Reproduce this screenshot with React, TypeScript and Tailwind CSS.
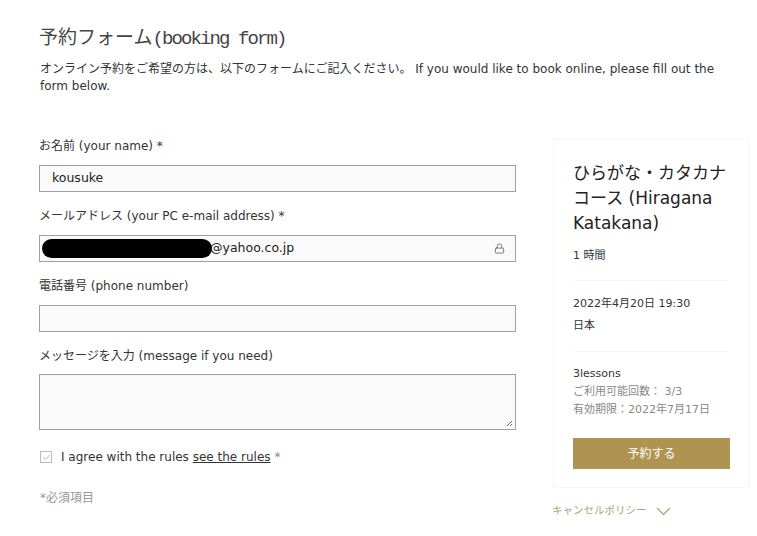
import { Lock, Check } from 'lucide-react';

const SANS = "font-['DejaVu_Sans','Noto_Sans_CJK_JP',sans-serif]";

function Field({ label, value, children, mt }: { label: string; value?: string; children?: React.ReactNode; mt?: string }) {
  return (
    <div className={mt}>
      <p className="h-[18px] leading-[18px] text-[12px] text-[#333]">{label}</p>
      <div className="mt-[10px] h-[27px] border border-[#a0a0a0] bg-[#fafafa] flex items-center px-[12px] text-[12.5px] text-[#222]">
        {children ?? value}
      </div>
    </div>
  );
}

export default function App() {
  return (
    <div className={`w-[757px] h-[536px] bg-white px-[39px] pt-[27px] ${SANS}`}>
      {/* Heading */}
      <h1 className="h-[24px] leading-[24px] text-[19px] text-[#444] font-['Liberation_Mono','Noto_Sans_CJK_JP',monospace]">
        予約フォーム<span className="tracking-[-1.9px]">(booking form)</span>
      </h1>
      <p className="mt-[10px] pl-px w-[690px] text-[12px] leading-[17px] text-[#333]">
        オンライン予約をご希望の方は、以下のフォームにご記入ください。 If you would like to book online, please fill out the form below.
      </p>

      <div className="mt-[42px] flex gap-[37px]">
        {/* Form column */}
        <div className="w-[477px] shrink-0">
          <Field label="お名前 (your name) *" value="kousuke" />
          <Field label="メールアドレス (your PC e-mail address) *" mt="mt-[15px]">
            <span className="flex-1 flex items-center">
              <span className="h-[19px] w-[170px] -ml-[10px] rounded-full bg-black" />
              <span className="-ml-[2px]">@yahoo.co.jp</span>
            </span>
            <Lock size={11} strokeWidth={1.6} className="text-[#555] -mr-[2px]" />
          </Field>
          <Field label="電話番号 (phone number)" mt="mt-[15px]" value="" />
          <div className="mt-[15px]">
            <p className="h-[18px] leading-[18px] text-[12px] text-[#333]">メッセージを入力 (message if you need)</p>
            <div className="mt-[9px] h-[56px] border border-[#a0a0a0] bg-[#fafafa] relative">
              <svg width="7" height="7" viewBox="0 0 7 7" className="absolute right-[2px] bottom-[2px]">
                <path d="M6 1 L1 6 M6 4 L4 6" stroke="#666" strokeWidth="1" />
              </svg>
            </div>
          </div>
          <div className="mt-[18px] h-[18px] flex items-center gap-[9px] text-[12px] text-[#333]">
            <span className="ml-px w-[12px] h-[12px] border border-[#bbb] bg-white flex items-center justify-center">
              <Check size={9} strokeWidth={2} className="text-[#a99a6a]" />
            </span>
            <span>
              I agree with the rules <span className="underline">see the rules</span> <span className="text-[#888]">*</span>
            </span>
          </div>
          <p className="mt-[23px] pl-px h-[18px] leading-[18px] text-[12px] text-[#999]">*必須項目</p>
        </div>

        {/* Summary column */}
        <div className="mt-[2px] self-start">
          <div className="w-[196px] border border-[#f6f6f6] pt-[21px] pb-[18px] pl-[19px] pr-[19px]">
            <p className="text-[17px] leading-[25px] text-[#222]">ひらがな・カタカナコース (Hiragana Katakana)</p>
            <p className="mt-[12px] text-[11px] leading-[16px] text-[#333]">1 時間</p>
            <div className="mt-[16px] border-t border-[#f6f6f6]" />
            <p className="mt-[13px] text-[11px] leading-[20px] text-[#333]">2022年4月20日 19:30</p>
            <p className="mt-[2px] text-[11px] leading-[20px] text-[#333]">日本</p>
            <div className="mt-[15px] border-t border-[#f6f6f6]" />
            <p className="mt-[13px] text-[11px] leading-[18px] text-[#333]">3lessons</p>
            <p className="text-[11px] leading-[18px] text-[#888]">ご利用可能回数： 3/3</p>
            <p className="text-[11px] leading-[18px] text-[#888]">有効期限：2022年7月17日</p>
            <button className="mt-[19px] w-[157px] h-[31px] bg-[#af9350] text-white text-[12px] flex items-center justify-center">
              予約する
            </button>
          </div>
          <div className="mt-[13px] -ml-px h-[20px] flex items-center gap-[9px] text-[10.5px] text-[#b3a37a]">
            <span>キャンセルポリシー</span>
            <svg width="15" height="9" viewBox="0 0 15 9" fill="none">
              <path d="M1 1 L7.5 7.5 L14 1" stroke="#b3a37a" strokeWidth="1.3" />
            </svg>
          </div>
        </div>
      </div>
    </div>
  );
}
